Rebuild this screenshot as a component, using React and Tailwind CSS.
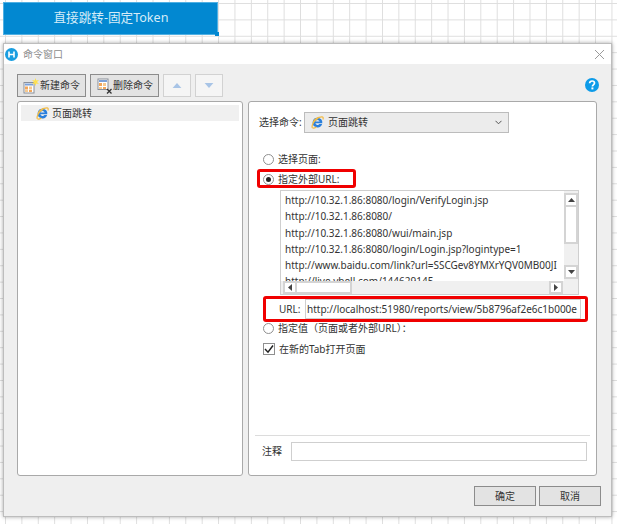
import React from "react";

const F = "font-['Noto_Sans','Noto_Sans_CJK_SC',sans-serif]";

function IE({ size = 13 }) {
  return (
    <svg width={size} height={size} viewBox="0 0 16 16" className="shrink-0">
      <path d="M8 2a6 6 0 1 0 5.7 7.9h-3.4a2.9 2.9 0 0 1-5-.9h8.6A6 6 0 0 0 8 2zM5.3 6.9a2.8 2.8 0 0 1 5.4 0z" fill="#2a7fdc" fillRule="evenodd" />
      <path d="M1.6 14.6C.6 12 2.6 6 9 2.6M2.6 10.2C2 6 6 1.5 13.2 1.2c2-.1 2.2 1.3 1.4 3" fill="none" stroke="#f2bb45" strokeWidth="1.5" />
      <path d="M1.8 14.6C3 15.4 5 14.6 6.6 13.6" fill="none" stroke="#f2bb45" strokeWidth="1.5" />
    </svg>
  );
}

function NewIcon() {
  return (
    <svg width="16" height="16" viewBox="0 0 16 16" className="shrink-0">
      <rect x="1" y="4.5" width="10" height="10.5" fill="#fff" stroke="#8a8f99" />
      <rect x="2" y="5.5" width="8" height="2" fill="#7ba0d8" />
      <rect x="2" y="8.5" width="3" height="3" fill="#f2a65a" />
      <rect x="6" y="8.5" width="3" height="3" fill="#f6c98f" />
      <rect x="2" y="12" width="3" height="2" fill="#f6c98f" />
      <rect x="6" y="12" width="3" height="2" fill="#f2a65a" />
      <path d="M12.5 0l.8 2.6 2.7-.5-2 2 2 2-2.7-.5-.8 2.6-.8-2.6-2.7.5 2-2-2-2 2.7.5z" fill="#ffe14d" />
    </svg>
  );
}

function DelIcon() {
  return (
    <svg width="16" height="16" viewBox="0 0 16 16" className="shrink-0">
      <rect x="1" y="1" width="10" height="10.5" fill="#fff" stroke="#8a8f99" />
      <rect x="2" y="2" width="8" height="2" fill="#7ba0d8" />
      <rect x="2" y="5" width="3" height="3" fill="#f2a65a" />
      <rect x="6" y="5" width="3" height="3" fill="#f6c98f" />
      <rect x="2" y="9" width="3" height="2" fill="#f6c98f" />
      <rect x="6" y="9" width="3" height="2" fill="#f2a65a" />
      <path d="M10 11l4.5 4.5M14.5 11L10 15.5" stroke="#333" strokeWidth="1.3" />
    </svg>
  );
}

function Arrow({ dir, color = "#444", w = 7, h = 4 }) {
  const d = {
    up: "M0 4L3.5 0L7 4Z",
    down: "M0 0L3.5 4L7 0Z",
    left: "M4 0L0 3.5L4 7Z",
    right: "M0 0L4 3.5L0 7Z",
  }[dir];
  const vb = dir === "up" || dir === "down" ? "0 0 7 4" : "0 0 4 7";
  return (
    <svg width={w} height={h} viewBox={vb}>
      <path d={d} fill={color} />
    </svg>
  );
}

function Radio({ on }) {
  return (
    <span className="w-[11px] h-[11px] rounded-full border border-[#8f8f8f] bg-white flex items-center justify-center shrink-0">
      {on && <span className="w-[5px] h-[5px] rounded-full bg-[#222]" />}
    </span>
  );
}

function SBtn({ children, className = "" }) {
  return (
    <div className={`bg-white border-2 border-[#d4d4d4] flex items-center justify-center shrink-0 ${className}`}>
      {children}
    </div>
  );
}

const urls = [
  "http://10.32.1.86:8080/login/VerifyLogin.jsp",
  "http://10.32.1.86:8080/",
  "http://10.32.1.86:8080/wui/main.jsp",
  "http://10.32.1.86:8080/login/Login.jsp?logintype=1",
  "http://www.baidu.com/link?url=SSCGev8YMXrYQV0MB00JI",
  "http://live.ybell.com/144629145",
];

export default function App() {
  return (
    <div
      className={`${F} relative w-[617px] h-[524px] overflow-hidden bg-white pt-[2px] pl-[3px] text-[10px] text-[#333] bg-[linear-gradient(to_right,#dedede_1.4px,transparent_1.4px),linear-gradient(to_bottom,#dedede_1.4px,transparent_1.4px)] bg-[size:16.4px_16.4px] bg-[position:5px_3px]`}
    >
      {/* Blue widget */}
      <div className="relative w-[215px] h-[33px] bg-[#0288d1] border border-[#4fb0e3] flex items-center justify-center text-[12.6px] text-[#d5ecf8]">
        <span className="ml-[1px]">直接跳转-固定Token</span>
        <span className="absolute -right-[2px] -bottom-[2px] w-[4px] h-[4px] bg-[#0288d1]" />
      </div>

      {/* Dialog */}
      <div className="mt-[8px] w-[609px] h-[474px] bg-[#efefef] border border-[#bdbdbd] shadow-[0_0_4px_rgba(0,0,0,0.35)] flex flex-col">
        {/* title */}
        <div className="h-[20px] bg-white flex items-center shrink-0 pl-[1px] pr-[6px]">
          <svg width="13" height="13" viewBox="0 0 13 13" className="shrink-0">
            <circle cx="6.5" cy="6.5" r="6.5" fill="#1a9ee0" />
            <path d="M4 3.5v6M9 3.5v6M4 6.5h5" stroke="#fff" strokeWidth="1.6" fill="none" />
          </svg>
          <span className="ml-[5px] text-[#8c8c8c]">命令窗口</span>
          <svg width="11" height="11" viewBox="0 0 11 11" className="ml-auto">
            <path d="M1 1l9 9M10 1l-9 9" stroke="#9a9a9a" strokeWidth="1" />
          </svg>
        </div>

        {/* toolbar */}
        <div className="h-[37px] shrink-0 pl-[13px] pr-[13px] pt-[10px] flex items-start">
          <button className="w-[69px] h-[23px] bg-[#e3e3e3] border border-[#8c8c8c] flex items-center pl-[5px] text-[#333] whitespace-nowrap">
            <NewIcon />
            <span className="ml-[1px]">新建命令</span>
          </button>
          <button className="ml-[4px] w-[69px] h-[23px] bg-[#e3e3e3] border border-[#8c8c8c] flex items-center pl-[6px] text-[#333] whitespace-nowrap">
            <DelIcon />
            <span>删除命令</span>
          </button>
          <button className="ml-[4px] w-[28px] h-[23px] bg-[#f5f5f5] border border-[#d2d2d2] flex items-center justify-center">
            <Arrow dir="up" color="#a8c4e6" w={10} h={5} />
          </button>
          <button className="ml-[4px] w-[28px] h-[23px] bg-[#f5f5f5] border border-[#d2d2d2] flex items-center justify-center">
            <Arrow dir="down" color="#a8c4e6" w={10} h={5} />
          </button>
          <svg width="14" height="14" viewBox="0 0 14 14" className="ml-auto mt-[4px] -mr-[1px]">
            <circle cx="7" cy="7" r="7" fill="#0d9be8" />
            <path d="M4.6 5.3C4.7 3.8 5.8 3 7.1 3c1.4 0 2.4.9 2.4 2.1 0 1.8-2.1 1.8-2.1 3.4" stroke="#fff" strokeWidth="1.7" fill="none" />
            <rect x="6.4" y="9.4" width="2" height="2" fill="#fff" />
          </svg>
        </div>

        {/* panels */}
        <div className="flex pl-[13px] gap-[5px] h-[375px] shrink-0">
          <div className="w-[226px] bg-white border border-[#a9a9a9] rounded-[3px] p-[3px]">
            <div className="h-[16px] bg-[#f0f0f0] flex items-center pl-[15px] gap-[3px]">
              <IE />
              <span>页面跳转</span>
            </div>
          </div>

          <div className="relative w-[349px] bg-white border border-[#a9a9a9] rounded-[3px] flex flex-col">
            {/* command select */}
            <div className="flex items-center mt-[10px] pl-[10px] h-[21px] whitespace-nowrap">
              <span className="w-[45px]">选择命令:</span>
              <div className="w-[205px] h-[21px] bg-[#ececec] border border-[#bcbcbc] flex items-center pl-[6px] gap-[3px]">
                <IE />
                <span className="ml-[1px]">页面跳转</span>
                <svg width="7" height="5" viewBox="0 0 7 5" className="ml-auto mr-[6px]">
                  <path d="M.5 .8L3.5 3.8L6.5 .8" fill="none" stroke="#555" />
                </svg>
              </div>
            </div>

            <div className="flex items-center gap-[4px] mt-[16px] pl-[14px] h-[20px]">
              <Radio />
              <span>选择页面:</span>
            </div>
            <div className="flex items-center gap-[4px] pl-[14px] h-[20px]">
              <Radio on />
              <span>指定外部URL:</span>
            </div>

            {/* url list */}
            <div className="ml-[31px] mt-[1px] w-[299px] h-[105px] border border-[#cfcfcf] flex flex-col shrink-0 overflow-hidden">
              <div className="flex h-[90px]">
                <div className="w-[284px] pl-[4px] pt-[1px] overflow-hidden whitespace-nowrap leading-[16.3px] text-[#333]">
                  {urls.map((u) => (
                    <div key={u} className="h-[16.3px]">{u}</div>
                  ))}
                </div>
                <div className="w-[14px] bg-[#f0f0f0] flex flex-col py-[2px] shrink-0">
                  <SBtn className="h-[14px]"><Arrow dir="up" /></SBtn>
                  <div className="h-[37px] bg-white border-2 border-[#d4d4d4] border-t-0" />
                  <SBtn className="mt-auto h-[14px]"><Arrow dir="down" /></SBtn>
                </div>
              </div>
              <div className="flex h-[13px] bg-[#f0f0f0] pl-[2px]">
                <SBtn className="w-[14px]"><Arrow dir="left" w={4} h={7} /></SBtn>
                <div className="w-[55px] bg-white border-2 border-[#d4d4d4] border-l-0" />
                <SBtn className="ml-auto mr-[15px] w-[14px]"><Arrow dir="right" w={4} h={7} /></SBtn>
              </div>
            </div>

            {/* URL field */}
            <div className="flex items-center pl-[30px] mt-[4px] h-[20px]">
              <span className="w-[26px]">URL:</span>
              <div className="w-[276px] h-[20px] border border-[#cfcfcf] pl-[1px] overflow-hidden whitespace-nowrap leading-[18px] text-[#333]">
                http://localhost:51980/reports/view/5b8796af2e6c1b000e
              </div>
            </div>

            <div className="flex items-center gap-[4px] pl-[14px] mt-[1px] h-[16px]">
              <Radio />
              <span>指定值（页面或者外部URL）：</span>
            </div>
            <div className="flex items-center gap-[4px] pl-[14px] mt-[5px] h-[16px]">
              <span className="w-[12px] h-[12px] border border-[#8f8f8f] bg-white flex items-center justify-center shrink-0">
                <svg width="10" height="10" viewBox="0 0 10 10">
                  <path d="M1 5l3 3.2L9 1.5" fill="none" stroke="#222" strokeWidth="1.5" />
                </svg>
              </span>
              <span>在新的Tab打开页面</span>
            </div>

            {/* note */}
            <div className="mt-auto mx-[6px] border-t border-[#dcdcdc] h-[30px] pt-[6px] pb-[3px] box-content flex items-start">
              <span className="ml-[7px] w-[29px] leading-[19px]">注释</span>
              <div className="w-[296px] h-[19px] border border-[#cfcfcf] bg-white" />
            </div>
          </div>
        </div>

        {/* footer buttons */}
        <div className="flex justify-end pr-[10px] pt-[10px] gap-[3px]">
          <button className="w-[62px] h-[20px] bg-[#e3e3e3] border border-[#8c8c8c] text-[#333]">确定</button>
          <button className="w-[62px] h-[20px] bg-[#e3e3e3] border border-[#8c8c8c] text-[#333]">取消</button>
        </div>
      </div>

      {/* red annotations */}
      <div className="absolute left-[257px] top-[169px] w-[99px] h-[19px] border-[3px] border-[#f00000] rounded-[3px]" />
      <div className="absolute left-[263px] top-[296px] w-[325px] h-[26px] border-[3px] border-[#f00000] rounded-[3px]" />
    </div>
  );
}
